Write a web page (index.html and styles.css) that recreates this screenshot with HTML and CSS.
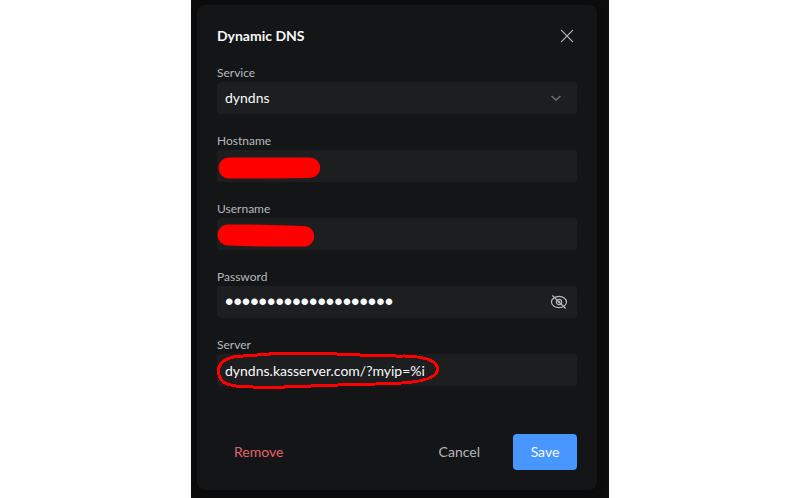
FILE: index.html
```
<!DOCTYPE html>
<html lang="en">

<head>
    <meta charset="UTF-8">
    <meta name="viewport" content="width=device-width, initial-scale=1.0">
    <title>Dynamic DNS</title>
    <link rel="stylesheet" href="styles.css">
</head>

<body>
    <main class="backdrop">
        <form class="dialog" role="dialog" aria-labelledby="dialog-title">
            <header class="dialog-header">
                <h1 id="dialog-title">Dynamic DNS</h1>
                <button type="button" class="icon-button" aria-label="Close">
                    <svg width="20" height="20" viewBox="0 0 20 20">
                        <path d="M4.2 4.2l11.6 11.6M15.8 4.2L4.2 15.8" />
                    </svg>
                </button>
            </header>
            <div class="fields">
                <div class="field">
                    <label for="service">Service</label>
                    <div class="control">
                        <select id="service">
                            <option>dyndns</option>
                        </select>
                        <svg class="chevron" width="20" height="20" viewBox="0 0 20 20">
                            <path d="M5.500 8l4.500 4 4.500-4" />
                        </svg>
                    </div>
                </div>
                <div class="field">
                    <label for="hostname">Hostname</label>
                    <div class="control">
                        <input id="hostname" type="text">
                        <svg class="mark" width="240" height="48" viewBox="0 0 240 48">
                            <path class="redacted" d="M20 16.500H101a10.200 10.200 0 0 1 0 20.400L59 37.500H20a10.500 10.500 0 0 1 0-21z" />
                        </svg>
                    </div>
                </div>
                <div class="field">
                    <label for="username">Username</label>
                    <div class="control">
                        <input id="username" type="text">
                        <svg class="mark" width="240" height="48" viewBox="0 0 240 48">
                            <path class="redacted" d="M19 15.500H41L96 17a10.300 10.300 0 0 1 0 20.500H51L19 36.500a10.500 10.500 0 0 1 0-21z" />
                        </svg>
                    </div>
                </div>
                <div class="field">
                    <label for="password">Password</label>
                    <div class="control">
                        <input id="password" class="password" type="password" value="abcdefghijklmnopqrst">
                        <button type="button" class="icon-button reveal" aria-label="Show password">
                            <svg width="20" height="20" viewBox="0 0 20 20">
                                <ellipse cx="10" cy="10" rx="7.500" ry="5.700" />
                                <circle cx="10" cy="10" r="2.700" />
                                <circle cx="10" cy="10" r="0.600" />
                                <path d="M3.300 3.500l13.400 13" />
                            </svg>
                        </button>
                    </div>
                </div>
                <div class="field">
                    <label for="server">Server</label>
                    <div class="control">
                        <input id="server" type="text" value="dyndns.kasserver.com/?myip=%i">
                        <svg class="mark" width="240" height="48" viewBox="0 0 240 48">
                            <path class="circled" d="M82 8C66 8 52 10 27 11.500 17 13 9.500 18 9.500 26c0 9 5 13 17 15 20 2 40 1.500 65 .500 38-2 66-2 92-3 27-1 45-5 45-14 0-9-14-13-33-13.500-40 .500-60-3-113.500-3z" />
                        </svg>
                    </div>
                </div>
            </div>
            <footer class="dialog-footer">
                <button type="button" class="button remove">Remove</button>
                <button type="button" class="button">Cancel</button>
                <button type="submit" class="button save">Save</button>
            </footer>
        </form>
    </main>
</body>

</html>
```
FILE: styles.css
```
* {
    box-sizing: border-box;
}

body {
    margin: 0;
    display: flex;
    justify-content: center;
    min-height: 100vh;
    background-color: #ffffff;
    font-family: Lato, sans-serif;
    font-size: 14px;
    line-height: 20px;
}

.backdrop {
    width: 100%;
    max-width: 418px;
    padding: 5px 12px 8px 6px;
    background-color: #0c0c0d;
}

.dialog {
    padding: 20px;
    border-radius: 8px;
    background-color: #141517;
    box-shadow: 0 2px 8px rgba(0, 0, 0, 0.3);
}

.dialog-header {
    display: flex;
    justify-content: space-between;
    align-items: center;
    height: 22px;
    margin-bottom: 17px;
}

h1 {
    margin: 0;
    font-size: 14px;
    font-weight: 700;
    color: #f9fafa;
}

svg {
    display: block;
    fill: none;
    stroke: #b6b8bc;
    stroke-width: 1.2;
}

.icon-button {
    padding: 0;
    border: none;
    background: none;
    cursor: pointer;
}

.fields {
    display: grid;
    gap: 18px;
}

label {
    display: block;
    height: 18px;
    font-size: 12px;
    line-height: 18px;
    color: #b6b8bc;
}

.control {
    position: relative;
}

input,
select {
    display: block;
    width: 100%;
    height: 32px;
    padding: 0 8px;
    border: none;
    border-radius: 4px;
    outline: none;
    appearance: none;
    background-color: #1c1e20;
    color: #f9fafa;
    font: inherit;
}

/* bigger bullets */
.password {
    font-family: "Liberation Sans", sans-serif;
    font-size: 24px;
}

.chevron {
    position: absolute;
    top: 6px;
    right: 11px;
    stroke: #6f7277;
    stroke-width: 1.5;
    pointer-events: none;
}

.reveal {
    position: absolute;
    top: 6px;
    right: 8px;
}

/* red marker drawn over the inputs */
.mark {
    position: absolute;
    top: -9px;
    left: -8px;
    pointer-events: none;
}

.redacted {
    fill: #ff0000;
    stroke: none;
}

.circled {
    stroke: #ff0000;
    stroke-width: 3;
    shape-rendering: crispEdges;
}

.dialog-footer {
    display: flex;
    gap: 16px;
    margin-top: 48px;
}

.button {
    min-width: 64px;
    height: 36px;
    padding: 0 17px;
    border: none;
    border-radius: 4px;
    background: none;
    color: #b6b8bc;
    font: inherit;
    cursor: pointer;
}

.remove {
    margin-right: auto;
    color: #e5636b;
}

.save {
    background-color: #4797ff;
    color: #f9fafa;
}
```
